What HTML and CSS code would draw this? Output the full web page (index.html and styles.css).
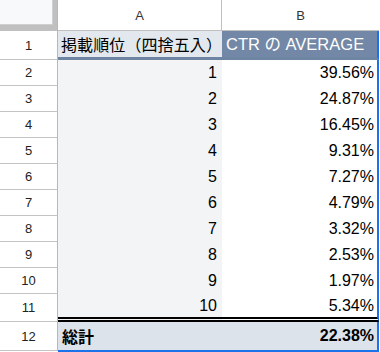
FILE: index.html
```html
<!DOCTYPE html>
<html lang="ja">
<head>
    <meta charset="UTF-8">
    <title>掲載順位別 CTR</title>
    <link rel="stylesheet" href="styles.css">
</head>
<body>
    <div class="sheet">
        <!-- 列見出し -->
        <div class="corner"><div class="corner-box"></div></div>
        <div class="col-head col-a">A</div>
        <div class="col-head col-b">B</div>

        <!-- ヘッダー行 -->
        <div class="row-head">1</div>
        <div class="cell title-a">掲載順位（四捨五入）</div>
        <div class="cell title-b">CTR の AVERAGE</div>

        <div class="row-head">2</div>
        <div class="cell num a">1</div>
        <div class="cell num b">39.56%</div>

        <div class="row-head">3</div>
        <div class="cell num a">2</div>
        <div class="cell num b">24.87%</div>

        <div class="row-head">4</div>
        <div class="cell num a">3</div>
        <div class="cell num b">16.45%</div>

        <div class="row-head">5</div>
        <div class="cell num a">4</div>
        <div class="cell num b">9.31%</div>

        <div class="row-head">6</div>
        <div class="cell num a">5</div>
        <div class="cell num b">7.27%</div>

        <div class="row-head">7</div>
        <div class="cell num a">6</div>
        <div class="cell num b">4.79%</div>

        <div class="row-head">8</div>
        <div class="cell num a">7</div>
        <div class="cell num b">3.32%</div>

        <div class="row-head">9</div>
        <div class="cell num a">8</div>
        <div class="cell num b">2.53%</div>

        <div class="row-head">10</div>
        <div class="cell num a">9</div>
        <div class="cell num b">1.97%</div>

        <div class="row-head">11</div>
        <div class="cell num a last">10</div>
        <div class="cell num b last">5.34%</div>

        <!-- 総計 -->
        <div class="row-head total-head">12</div>
        <div class="cell total-a">総計</div>
        <div class="cell num total-b">22.38%</div>
    </div>
</body>
</html>
```

FILE: styles.css
```css
body {
    margin: 0;
    background: #fff;
    font-family: 'Liberation Sans', Arial, 'Noto Sans CJK JP', sans-serif;
    color: #000;
}

.sheet {
    display: grid;
    grid-template-columns: 58px 164px 157px;
    grid-template-rows: 31px 29px repeat(9, 26px) 28px 30px;
}

.corner {
    background: #c0c0c0;
    border-right: 1px solid #b8b8b8;
    box-sizing: border-box;
}

.corner-box {
    width: 52px;
    height: 24px;
    background: #f8f9fa;
    border-right: 1px solid #d0d0d0;
    border-bottom: 1px solid #d0d0d0;
}

.col-head {
    display: flex;
    align-items: center;
    justify-content: center;
    font-size: 13px;
    color: #333;
    border-bottom: 1px solid #c0c0c0;
    box-sizing: border-box;
}

.col-a {
    border-right: 1px solid #c0c0c0;
}

.row-head {
    display: flex;
    align-items: center;
    justify-content: center;
    font-size: 13px;
    color: #222;
    border-right: 1px solid #b8b8b8;
    border-bottom: 1px solid #c4c4c4;
    box-sizing: border-box;
}

.total-head {
    height: 29px;
}

.cell {
    display: flex;
    align-items: center;
    font-size: 16px;
    line-height: 1;
    white-space: nowrap;
    overflow: hidden;
    box-sizing: border-box;
}

.num {
    justify-content: flex-end;
}

.a {
    background: #f3f4f6;
    padding-right: 5px;
}

.b {
    padding-right: 3px;
    border-right: 2px solid #1a73e8;
}

.title-a,
.title-b {
    padding-left: 4px;
    border-bottom: 3px solid #6d84a3;
}

.title-a {
    background: #e3e8ee;
    padding-left: 3px;
    font-family: 'Noto Sans CJK JP', sans-serif;
    letter-spacing: 0.1px;
}

.title-b {
    background: #7388a6;
    color: #fff;
    font-size: 16.5px;
    font-family: 'Liberation Sans', 'Noto Sans CJK JP', sans-serif;
    border-right: 2px solid #1a73e8;
}

.last {
    border-bottom: 5px double #000;
}

.total-a,
.total-b {
    background: #dde3ea;
    font-weight: bold;
    border-bottom: 2px solid #1a73e8;
}

.total-a {
    padding-left: 4px;
    font-family: 'Noto Sans CJK JP', sans-serif;
}

.total-b {
    padding-right: 3px;
    border-right: 2px solid #1a73e8;
}
```
